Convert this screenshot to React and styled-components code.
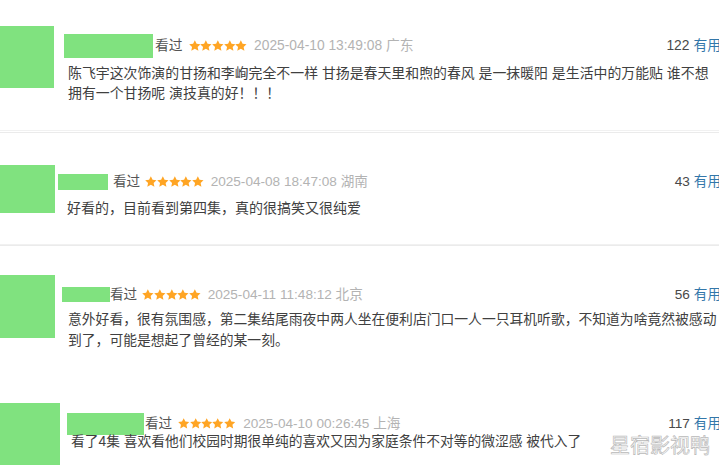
import React from "react";
import styled, { createGlobalStyle } from "styled-components";

const Global = createGlobalStyle`
  html, body { margin: 0; padding: 0; background: #fff; }
  body { font-family: "Liberation Sans", "Noto Sans CJK SC", sans-serif; }
`;

const Page = styled.div`
  width: 719px;
  height: 470px;
  overflow: hidden;
  background: #fff;
`;

const Shot = styled.div`
  position: relative;
  display: flex;
  align-items: flex-start;
  width: 721px;
  height: ${p => p.h}px;
  overflow: hidden;
`;

const Divider = styled.div`
  height: ${p => p.h}px;
  box-sizing: border-box;
  border-top: 1px solid #f1f1f1;
  border-bottom: 1px solid #ebebeb;
`;

const Avatar = styled.div`
  flex: none;
  width: ${p => p.w}px;
  height: ${p => p.h}px;
  margin-top: ${p => p.top}px;
  background: #80e27f;
`;

const Body = styled.div`
  flex: 1;
  min-width: 0;
  margin-left: ${p => p.left}px;
  padding-top: ${p => p.top}px;
`;

const Header = styled.div`
  display: flex;
  align-items: center;
  height: ${p => p.h}px;
  font-size: ${p => p.fs}px;
  line-height: 18px;
  white-space: nowrap;
`;

const NameBlock = styled.div`
  flex: none;
  width: ${p => p.w}px;
  height: ${p => p.h}px;
  background: #80e27f;
`;

const Watched = styled.span`
  margin-left: ${p => p.gap}px;
  color: #555;
`;

const Stars = styled.span`
  display: inline-flex;
  margin-left: ${p => p.gap}px;
`;

const DateText = styled.span`
  margin-left: ${p => p.gap}px;
  color: #b3b3b3;
`;

const Votes = styled.span`
  margin-left: auto;
  color: #494949;
  b {
    font-weight: normal;
    color: #3377aa;
    margin-left: 4px;
  }
`;

const Text = styled.div`
  margin-top: ${p => p.gap}px;
  padding-left: ${p => p.left}px;
  font-size: ${p => p.fs}px;
  line-height: ${p => p.lh}px;
  color: #404040;
  white-space: nowrap;
`;

const Watermark = styled.div`
  position: absolute;
  right: 11px;
  bottom: 15px;
  font-family: "Noto Sans CJK SC", sans-serif;
  font-size: 20px;
  line-height: 20px;
  color: rgba(255, 255, 255, 0.85);
  -webkit-text-stroke: 0.7px #b9b9b9;
`;

const Star = ({ size }) => (
  <svg width={size} height={size} viewBox="0.5 0.5 23 23">
    <path
      d="M12 0.8l3.4 7 7.7 1-5.6 5.3 1.5 7.6L12 17.9l-7 3.8 1.5-7.6L0.9 8.8l7.7-1z"
      fill="#ffa524"
    />
  </svg>
);

const shots = [
  {
    h: 130, divider: 3,
    avatar: { w: 54, h: 62, top: 26 },
    bodyLeft: 10, nameTop: 34, nameW: 89, nameH: 24,
    gaps: [2, 6, 7], star: 11.7, hfs: 13.8,
    date: "2025-04-10 13:49:08 广东", votes: 122,
    textLeft: 4, textGap: 6, lh: 19.5, fs: 13.9,
    lines: [
      "陈飞宇这次饰演的甘扬和李峋完全不一样 甘扬是春天里和煦的春风 是一抹暖阳 是生活中的万能贴 谁不想",
      "拥有一个甘扬呢 演技真的好！！！",
    ],
  },
  {
    h: 111, divider: 2,
    avatar: { w: 55, h: 48, top: 32 },
    bodyLeft: 3, nameTop: 41, nameW: 50, nameH: 16,
    gaps: [5, 5, 7], star: 11.7, hfs: 13.6,
    date: "2025-04-08 18:47:08 湖南", votes: 43,
    textLeft: 9, textGap: 8, lh: 20, fs: 14,
    lines: ["好看的，目前看到第四集，真的很搞笑又很纯爱"],
  },
  {
    h: 119, divider: 0,
    avatar: { w: 55, h: 63, top: 29 },
    bodyLeft: 7, nameTop: 41, nameW: 48, nameH: 15,
    gaps: [0, 5, 7], star: 11.7, hfs: 13.6,
    date: "2025-04-11 11:48:12 北京", votes: 56,
    textLeft: 6, textGap: 7, lh: 21, fs: 13.8,
    lines: [
      "意外好看，很有氛围感，第二集结尾雨夜中两人坐在便利店门口一人一只耳机听歌，不知道为啥竟然被感动",
      "到了，可能是想起了曾经的某一刻。",
    ],
  },
  {
    h: 105, divider: 0,
    avatar: { w: 60, h: 62, top: 38 },
    bodyLeft: 7, nameTop: 48, nameW: 77, nameH: 22,
    gaps: [1, 6, 8], star: 11.4, hfs: 13.6,
    date: "2025-04-10 00:26:45 上海", votes: 117,
    textLeft: 4, textGap: -2, lh: 17, fs: 13.75,
    lines: ["看了4集 喜欢看他们校园时期很单纯的喜欢又因为家庭条件不对等的微涩感 被代入了"],
    watermark: "星宿影视鸭",
  },
];

export default function App() {
  return (
    <Page>
      <Global />
      {shots.map((s, i) => (
        <React.Fragment key={i}>
          <Shot h={s.h}>
            <Avatar w={s.avatar.w} h={s.avatar.h} top={s.avatar.top} />
            <Body left={s.bodyLeft} top={s.nameTop}>
              <Header h={s.nameH} fs={s.hfs}>
                <NameBlock w={s.nameW} h={s.nameH} />
                <Watched gap={s.gaps[0]}>看过</Watched>
                <Stars gap={s.gaps[1]}>
                  {[0, 1, 2, 3, 4].map(k => <Star key={k} size={s.star} />)}
                </Stars>
                <DateText gap={s.gaps[2]}>{s.date}</DateText>
                <Votes>{s.votes}<b>有用</b></Votes>
              </Header>
              <Text gap={s.textGap} left={s.textLeft} fs={s.fs} lh={s.lh}>
                {s.lines.map((l, k) => <div key={k}>{l}</div>)}
              </Text>
            </Body>
            {s.watermark && <Watermark>{s.watermark}</Watermark>}
          </Shot>
          {s.divider > 0 && <Divider h={s.divider} />}
        </React.Fragment>
      ))}
    </Page>
  );
}
